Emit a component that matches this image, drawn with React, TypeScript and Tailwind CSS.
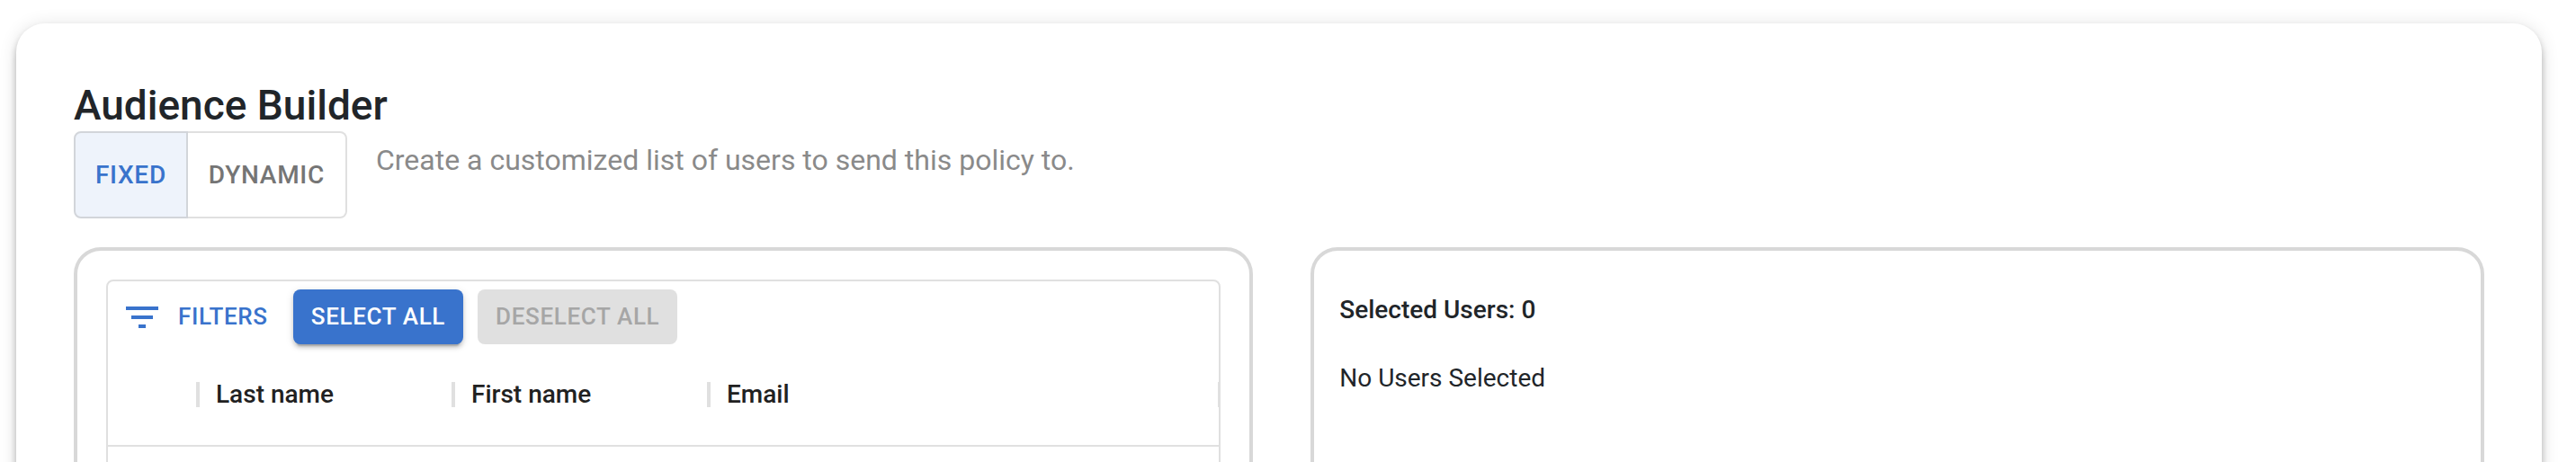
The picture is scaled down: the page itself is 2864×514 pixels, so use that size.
import { useState } from 'react'
import clsx from 'clsx'

type Mode = 'fixed' | 'dynamic'

const modes: { id: Mode; label: string }[] = [
	{ id: 'fixed', label: 'FIXED' },
	{ id: 'dynamic', label: 'DYNAMIC' },
]

const columns = [
	{ label: 'Last name', width: 'w-[284px]' },
	{ label: 'First name', width: 'w-[284px]' },
	{ label: 'Email', width: '' },
]

function FilterIcon() {
	return (
		<svg viewBox="0 0 24 24" className="size-12 fill-current" aria-hidden="true">
			<path d="M10 18h4v-2h-4v2zM3 6v2h18V6H3zm3 7h12v-2H6v2z" />
		</svg>
	)
}

// Column divider at the right edge of a header cell
function Separator({ last = false }: { last?: boolean }) {
	return (
		<span
			className={clsx(
				'absolute top-1/2 h-7 -translate-y-1/2 bg-[#e0e0e0]',
				last ? 'right-0 w-px' : '-right-0.5 w-1'
			)}
		/>
	)
}

export default function App() {
	const [mode, setMode] = useState<Mode>('fixed')

	return (
		<main className="h-screen overflow-hidden bg-white font-['Roboto',sans-serif] text-[#212529]">
			<section className="mt-[26px] mr-[38px] ml-[18px] rounded-[32px] bg-white p-16 shadow-[0_4px_8px_-2px_rgba(0,0,0,0.2),0_8px_10px_0_rgba(0,0,0,0.14),0_2px_20px_0_rgba(0,0,0,0.12)]">
				<h1 className="mb-0.5 text-[46px] leading-[54px] font-medium">Audience Builder</h1>

				<div className="flex items-start gap-8">
					{/* Mode switch */}
					<div role="group" aria-label="Audience type" className="flex">
						{modes.map(({ id, label }) => (
							<button
								key={id}
								type="button"
								aria-pressed={mode === id}
								onClick={() => setMode(id)}
								className={clsx(
									'border-2 px-[22px] py-[22px] text-[28px] leading-[49px] font-medium tracking-wide first:rounded-l-lg last:rounded-r-lg last:border-l-0 last:px-[23px]',
									mode === id
										? 'border-[#d2d5da] bg-[#eef3fb] text-[#3973cc]'
										: 'border-[#e0e0e0] text-[#757575]'
								)}
							>
								{label}
							</button>
						))}
					</div>
					<p className="pt-2 text-[32px] leading-[48px] text-[#8a8a8a]">
						Create a customized list of users to send this policy to.
					</p>
				</div>

				<div className="mt-8 grid grid-cols-[201fr_200fr] gap-16">
					{/* Available users */}
					<div className="min-w-0 rounded-[30px] border-4 border-[#d8d8d8] p-8">
						<div className="min-h-[400px] rounded-lg border-2 border-[#e0e0e0]">
							<div className="flex items-center gap-4 px-2 pt-[9px]">
								<button
									type="button"
									className="flex items-center gap-4 rounded-lg pr-3 pl-1.5 text-[26px] leading-[45px] font-medium tracking-wide text-[#3973cc]"
								>
									<FilterIcon />
									FILTERS
								</button>
								<button
									type="button"
									className="rounded-lg bg-[#3973cc] px-5 py-2 text-[26px] leading-[45px] font-medium tracking-wide text-white shadow-[0_6px_2px_-4px_rgba(0,0,0,0.2),0_4px_4px_0_rgba(0,0,0,0.14),0_2px_10px_0_rgba(0,0,0,0.12)]"
								>
									SELECT ALL
								</button>
								<button
									type="button"
									disabled
									className="rounded-lg bg-[#e0e0e0] px-5 py-2 text-[26px] leading-[45px] font-medium tracking-wide text-[#a6a6a6]"
								>
									DESELECT ALL
								</button>
							</div>
							<table className="w-full table-fixed border-collapse text-left text-[28px] text-[#212121]">
								<thead>
									<tr className="h-[113px] border-b-2 border-[#e0e0e0]">
										<td className="relative w-[100px]">
											<Separator />
										</td>
										{columns.map((column, i) => (
											<th
												key={column.label}
												scope="col"
												className={clsx('relative px-5 font-medium', column.width)}
											>
												{column.label}
												<Separator last={i === columns.length - 1} />
											</th>
										))}
									</tr>
								</thead>
							</table>
						</div>
					</div>

					{/* Selection */}
					<div className="flex min-w-0 flex-col gap-8 rounded-[30px] border-4 border-[#d8d8d8] px-7 py-11 text-[28px] leading-[44px]">
						<h2 className="font-medium">Selected Users: 0</h2>
						<p>No Users Selected</p>
					</div>
				</div>
			</section>
		</main>
	)
}
